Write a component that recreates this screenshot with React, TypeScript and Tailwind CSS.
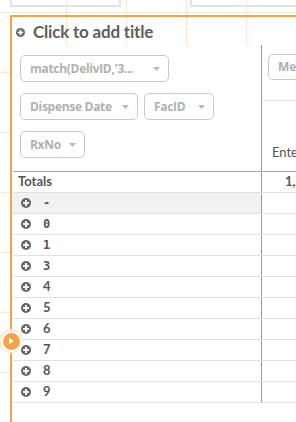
const PlusIcon = ({ size = 10 }: { size?: number }) => (
  <svg width={size} height={size} viewBox="0 0 10 10" className="shrink-0">
    <circle cx="5" cy="5" r="5" fill="#666" />
    <rect x="2" y="4.1" width="6" height="1.8" fill="#fff" />
    <rect x="4.1" y="2" width="1.8" height="6" fill="#fff" />
  </svg>
);

const Caret = () => (
  <svg width="7" height="4" viewBox="0 0 7 4" className="shrink-0">
    <path d="M0 0h7L3.5 4z" fill="#b8b8b8" />
  </svg>
);

const Pill = ({ label, w }: { label: string; w: string }) => (
  <div
    className={`${w} h-[27px] flex items-center justify-between gap-[5px] rounded-[5px] border border-[#c9c9c9] pl-[9px] pr-[8px] text-[12px] font-bold tracking-[-0.3px] text-[#b0b0b0] whitespace-nowrap`}
    style={{ fontFamily: "'Open Sans', sans-serif" }}
  >
    <span>{label}</span>
    <Caret />
  </div>
);

const rows = [
  { v: "-", mono: true, hl: true },
  { v: "0", mono: true },
  { v: "1", mono: true },
  { v: "3", mono: true },
  { v: "4" },
  { v: "5" },
  { v: "6" },
  { v: "7" },
  { v: "8" },
  { v: "9" },
];

export default function App() {
  return (
    <div
      className="relative w-[296px] h-[422px] overflow-hidden bg-white"
      style={{ fontFamily: "Lato, 'Open Sans', sans-serif" }}
    >
      {/* neighbouring objects above */}
      <div className="absolute left-[10px] top-[-10px] w-[111px] h-[17px] border-2 border-[#e3e3e3]" />
      <div className="absolute left-[190px] top-[-10px] w-[120px] h-[17px] border-2 border-[#e3e3e3]" />

      {/* snap grid */}
      <div className="absolute left-0 right-0 top-[12px] h-px bg-[#fde6cf]" />
      {[66, 126, 186, 246].map((x) => (
        <div key={x} className="absolute top-0 h-[45px] w-px bg-[#fde6cf]" style={{ left: x }} />
      ))}
      {[72, 132, 192, 252, 312, 372].map((y) => (
        <div key={y} className="absolute left-0 w-[10px] h-px bg-[#fde6cf]" style={{ top: y }} />
      ))}

      {/* selected object frame */}
      <div className="absolute left-[10px] top-[15px] right-0 bottom-0 border-l-2 border-t-2 border-[#f7a245] flex flex-col">
        <div className="h-[28px] flex items-center gap-[8px] pl-[4px] pt-[2px]">
          <PlusIcon size={9} />
          <span className="text-[17px] font-bold text-[#5e5e5e] tracking-[-0.2px]">Click to add title</span>
        </div>

        {/* header area */}
        <div className="flex h-[126px]">
          <div className="w-[250px] shrink-0 border-r border-[#9a9a9a] pl-[8px] pt-[10px] flex flex-col gap-[11px]">
            <Pill label="match(DelivID,'3..." w="w-[149px]" />
            <div className="flex gap-[6px]">
              <Pill label="Dispense Date" w="w-[118px]" />
              <Pill label="FacID" w="w-[70px]" />
            </div>
            <Pill label="RxNo" w="w-[65px]" />
          </div>
          <div className="flex-1 flex flex-col">
            <div className="h-[56px] border-b border-[#e3e3e3] pl-[6px] pt-[9px]">
              <div
                className="w-[80px] h-[26px] flex items-center rounded-[5px] border border-[#c9c9c9] pl-[9px] text-[12px] font-bold text-[#b0b0b0]"
                style={{ fontFamily: "'Open Sans', sans-serif" }}
              >
                Measures
              </div>
            </div>
            <div className="flex-1 flex items-end pb-[9px] pl-[10px] text-[13px] text-[#555]">Enter</div>
          </div>
        </div>

        {/* table */}
        <div className="ml-[1px] flex flex-col">
          <div className="flex h-[22px] border-t border-b border-t-[#a6a6a6] border-b-[#e0e0e0] text-[13px] font-bold text-[#555]">
            <div className="w-[249px] shrink-0 border-r border-[#9a9a9a] flex items-center pl-[5px]">Totals</div>
            <div className="flex-1 flex items-center pl-[23px]">1,</div>
          </div>
          {rows.map((r) => (
            <div key={r.v} className="flex h-[21px] border-b border-[#e0e0e0] text-[13px] font-bold text-[#555]">
              <div
                className={`w-[249px] shrink-0 border-r border-[#9a9a9a] flex items-center gap-[12px] pl-[8px] ${
                  r.hl ? "bg-[#f2f2f2]" : ""
                }`}
              >
                <PlusIcon />
                <span
                  style={
                    r.mono
                      ? { fontFamily: "'DejaVu Sans Mono', monospace", fontSize: 12, fontWeight: 700 }
                      : undefined
                  }
                >
                  {r.v}
                </span>
              </div>
              <div className="flex-1" />
            </div>
          ))}
        </div>
      </div>

      {/* side play handle */}
      <div className="absolute left-[-1px] top-[329px] w-[24px] h-[24px] rounded-full bg-[#fde9d4] flex items-center justify-center">
        <div className="w-[21px] h-[21px] rounded-full bg-[#f7a245] border-2 border-white flex items-center justify-center">
          <svg width="6" height="8" viewBox="0 0 6 8">
            <path d="M1 0.5L5.5 4 1 7.5z" fill="#fff" />
          </svg>
        </div>
      </div>
    </div>
  );
}
